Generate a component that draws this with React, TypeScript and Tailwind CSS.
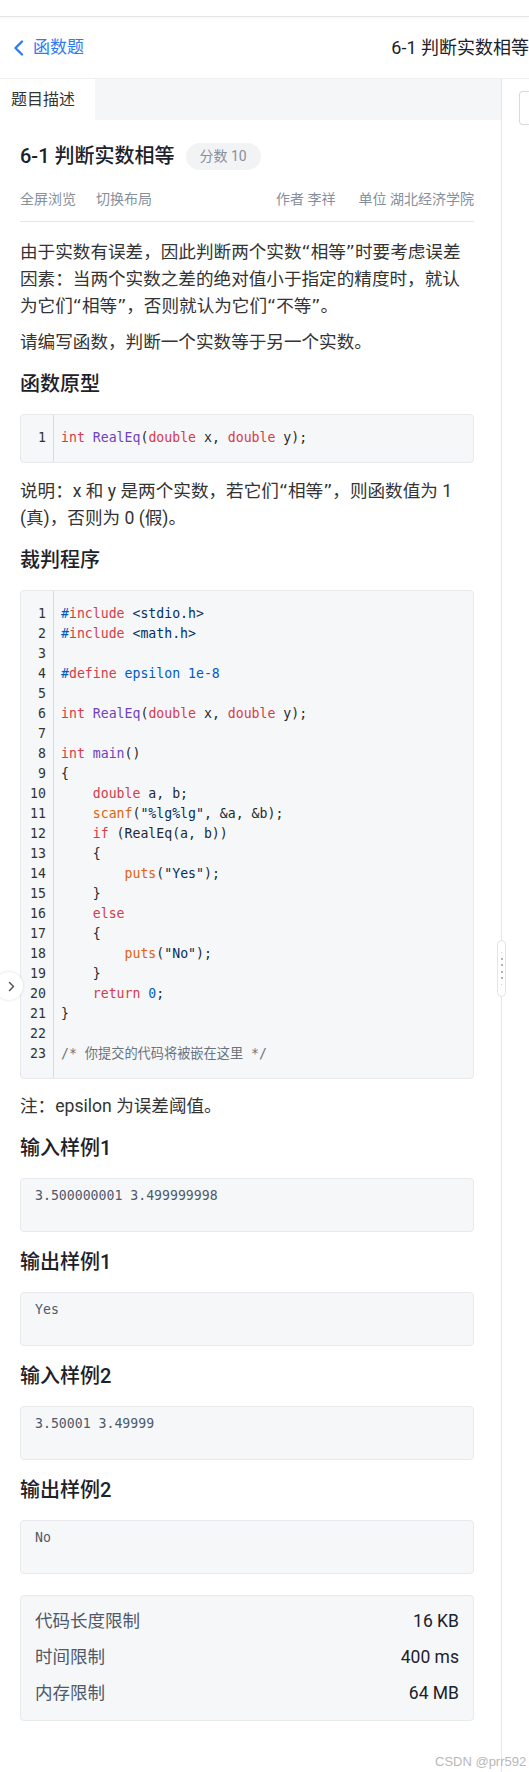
import { FC } from 'react';

type Tok = [string, string];

const C = {
  kw: 'text-[#d73a49]',
  fn: 'text-[#6f42c1]',
  bi: 'text-[#e36209]',
  str: 'text-[#032f62]',
  num: 'text-[#005cc5]',
  cm: 'text-[#6a737d]',
  pl: 'text-[#24292e]',
};

const judgeCode: Tok[][] = [
  [[C.num, '#'], [C.kw, 'include'], [C.str, ' <stdio.h>']],
  [[C.num, '#'], [C.kw, 'include'], [C.str, ' <math.h>']],
  [],
  [[C.num, '#'], [C.kw, 'define'], [C.num, ' epsilon 1e-8']],
  [],
  [[C.kw, 'int'], [C.pl, ' '], [C.fn, 'RealEq'], [C.pl, '('], [C.kw, 'double'], [C.pl, ' x, '], [C.kw, 'double'], [C.pl, ' y);']],
  [],
  [[C.kw, 'int'], [C.pl, ' '], [C.fn, 'main'], [C.pl, '()']],
  [[C.pl, '{']],
  [[C.pl, '    '], [C.kw, 'double'], [C.pl, ' a, b;']],
  [[C.pl, '    '], [C.bi, 'scanf'], [C.pl, '('], [C.str, '"%lg%lg"'], [C.pl, ', &a, &b);']],
  [[C.pl, '    '], [C.kw, 'if'], [C.pl, ' (RealEq(a, b))']],
  [[C.pl, '    {']],
  [[C.pl, '        '], [C.bi, 'puts'], [C.pl, '('], [C.str, '"Yes"'], [C.pl, ');']],
  [[C.pl, '    }']],
  [[C.pl, '    '], [C.kw, 'else']],
  [[C.pl, '    {']],
  [[C.pl, '        '], [C.bi, 'puts'], [C.pl, '('], [C.str, '"No"'], [C.pl, ');']],
  [[C.pl, '    }']],
  [[C.pl, '    '], [C.kw, 'return'], [C.pl, ' '], [C.num, '0'], [C.pl, ';']],
  [[C.pl, '}']],
  [],
  [[C.cm, '/* 你提交的代码将被嵌在这里 */']],
];

const protoCode: Tok[][] = [
  [[C.kw, 'int'], [C.pl, ' '], [C.fn, 'RealEq'], [C.pl, '('], [C.kw, 'double'], [C.pl, ' x, '], [C.kw, 'double'], [C.pl, ' y);']],
];

const mono = "font-['DejaVu_Sans_Mono','Noto_Sans_CJK_SC',monospace]";

// half-em quotes, as the source page renders them
const Q: FC<{ children: string }> = ({ children }) => (
  <span className="font-['DejaVu_Sans',sans-serif]">{children}</span>
);

const CodeBlock: FC<{ lines: Tok[][] }> = ({ lines }) => (
  <div className={`mt-[16px] flex rounded-[4px] border border-[#e8e9ec] bg-[#f6f7f9] text-[13.2px] leading-[20px] ${mono}`}>
    <div className="w-[33px] shrink-0 border-r border-[#d9dbe0] pt-[13px] pb-[14px] pr-[7px] text-right text-[#333]">
      {lines.map((_, i) => (
        <div key={i}>{i + 1}</div>
      ))}
    </div>
    <div className="pt-[13px] pb-[14px] pl-[7px] whitespace-pre">
      {lines.map((l, i) => (
        <div key={i} className="h-[20px]">
          {l.map(([c, t], j) => (
            <span key={j} className={c}>
              {t}
            </span>
          ))}
        </div>
      ))}
    </div>
  </div>
);

const Heading: FC<{ children: string }> = ({ children }) => (
  <h2 className="mt-[14px] h-[28px] text-[20px] leading-[28px] font-medium text-[#1d2129]">{children}</h2>
);

const Sample: FC<{ title: string; text: string }> = ({ title, text }) => (
  <>
    <h2 className="mt-[16px] h-[28px] text-[20px] leading-[28px] font-medium text-[#1d2129]">{title}</h2>
    <div className={`mt-[16px] h-[54px] rounded-[4px] border border-[#e8e9ec] bg-[#f6f7f9] pl-[14px] pt-[7px] text-[13.2px] leading-[20px] text-[#4e5969] ${mono}`}>
      {text}
    </div>
  </>
);

export default function App() {
  return (
    <div className="relative h-[1772px] w-[529px] overflow-hidden bg-white font-['Roboto','Noto_Sans_CJK_SC',sans-serif] text-[#333]">
      <div className="h-[17px] border-b border-[#e3e4e7] shadow-[0_1px_2px_rgba(0,0,0,0.04)]" />
      <header className="flex h-[62px] items-center justify-between border-b border-[#eceef1] pl-[13px]">
        <div className="flex items-center gap-[9px] text-[17px] text-[#2c7bf2]">
          <svg width="11" height="16" viewBox="0 0 11 16" fill="none">
            <path d="M9 1.5 L2.5 8 L9 14.5" stroke="#2c7bf2" strokeWidth="2.3" strokeLinecap="round" strokeLinejoin="round" />
          </svg>
          <span>函数题</span>
        </div>
        <div className="whitespace-nowrap text-[18px] text-[#1d2129]">6-1 判断实数相等</div>
      </header>
      <div className="flex">
        <div className="w-[501px] shrink-0">
          <div className="flex h-[41px] bg-[#f5f6f8]">
            <div className="flex w-[95px] items-center bg-white pl-[11px] text-[16px] text-[#333]">题目描述</div>
          </div>
          <div className="flex flex-col pl-[20px] pr-[27px]">
            <div className="mt-[22px] flex h-[28px] items-center">
              <span className="text-[20px] leading-[28px] font-medium text-[#1d2129]">6-1 判断实数相等</span>
              <span className="ml-[11px] flex h-[27px] items-center rounded-full bg-[#f2f3f5] px-[14px] text-[14px] text-[#86909c]">分数 10</span>
            </div>
            <div className="mt-[19px] flex h-[20px] items-center justify-between text-[14px] text-[#86909c]">
              <div className="flex gap-[20px]">
                <span>全屏浏览</span>
                <span>切换布局</span>
              </div>
              <div className="flex gap-[23px]">
                <span>作者 李祥</span>
                <span>单位 湖北经济学院</span>
              </div>
            </div>
            <div className="mt-[12px] border-t border-[#e5e6eb]" />
            <p className="mt-[17px] text-[17.6px] leading-[27px]">
              由于实数有误差，因此判断两个实数<Q>“</Q>相等<Q>”</Q>时要考虑误差因素：当两个实数之差的绝对值小于指定的精度时，就认为它们<Q>“</Q>相等<Q>”</Q>，否则就认为它们<Q>“</Q>不等<Q>”</Q>。
            </p>
            <p className="mt-[9px] text-[17.6px] leading-[27px]">请编写函数，判断一个实数等于另一个实数。</p>
            <Heading>函数原型</Heading>
            <CodeBlock lines={protoCode} />
            <p className="mt-[15px] text-[17.6px] leading-[27px]">
              说明：x 和 y 是两个实数，若它们<Q>“</Q>相等<Q>”</Q>，则函数值为 1 (真)，否则为 0 (假)。
            </p>
            <Heading>裁判程序</Heading>
            <CodeBlock lines={judgeCode} />
            <p className="mt-[14px] text-[17.6px] leading-[27px]">注：epsilon 为误差阈值。</p>
            <h2 className="mt-[14px] h-[28px] text-[20px] leading-[28px] font-medium text-[#1d2129]">输入样例1</h2>
            <div className={`mt-[16px] h-[54px] rounded-[4px] border border-[#e8e9ec] bg-[#f6f7f9] pl-[14px] pt-[7px] text-[13.2px] leading-[20px] text-[#4e5969] ${mono}`}>
              3.500000001 3.499999998
            </div>
            <Sample title="输出样例1" text="Yes" />
            <Sample title="输入样例2" text="3.50001 3.49999" />
            <Sample title="输出样例2" text="No" />
            <div className="mt-[21px] rounded-[4px] border border-[#e8e9ec] bg-[#f6f7f9] px-[14px] pt-[7px] pb-[9px] text-[17.5px]">
              {[
                ['代码长度限制', '16 KB'],
                ['时间限制', '400 ms'],
                ['内存限制', '64 MB'],
              ].map(([k, v]) => (
                <div key={k} className="flex h-[36px] items-center justify-between">
                  <span className="text-[#4e5969]">{k}</span>
                  <span className="text-[#1d2129]">{v}</span>
                </div>
              ))}
            </div>
          </div>
        </div>
        <div className="h-[1700px] flex-1 border-l border-[#e5e6eb] pt-[12px] pl-[17px]">
          <div className="h-[34px] rounded-l-[4px] border border-r-0 border-[#d9dbe0] bg-white" />
        </div>
      </div>

      {/* floating toggles */}
      <div className="absolute left-[-5px] top-[972px] flex h-[28px] w-[28px] items-center justify-center rounded-full bg-white pl-[4px] shadow-[0_0_3px_rgba(0,0,0,0.15)]">
        <svg width="7" height="11" viewBox="0 0 7 11" fill="none">
          <path d="M1.5 1.5 L5.5 5.5 L1.5 9.5" stroke="#555" strokeWidth="1.5" strokeLinecap="round" strokeLinejoin="round" />
        </svg>
      </div>
      <div className="absolute left-[497px] top-[940px] flex h-[57px] w-[9px] flex-col items-center justify-center gap-[4.5px] rounded-full border border-[#e3e4e7] bg-white">
        <span className="h-[1px] w-[1px] rounded-full bg-[#bbb]" />
        <span className="h-[2px] w-[2px] rounded-full bg-[#999]" />
        <span className="h-[2px] w-[2px] rounded-full bg-[#999]" />
        <span className="h-[2px] w-[2px] rounded-full bg-[#999]" />
        <span className="h-[2px] w-[2px] rounded-full bg-[#999]" />
        <span className="h-[1px] w-[1px] rounded-full bg-[#bbb]" />
      </div>
      <div className="absolute left-[435px] top-[1752px] whitespace-nowrap font-['Liberation_Sans',sans-serif] text-[13px] text-[#b8b8b8]">CSDN @prr592</div>
    </div>
  );
}
